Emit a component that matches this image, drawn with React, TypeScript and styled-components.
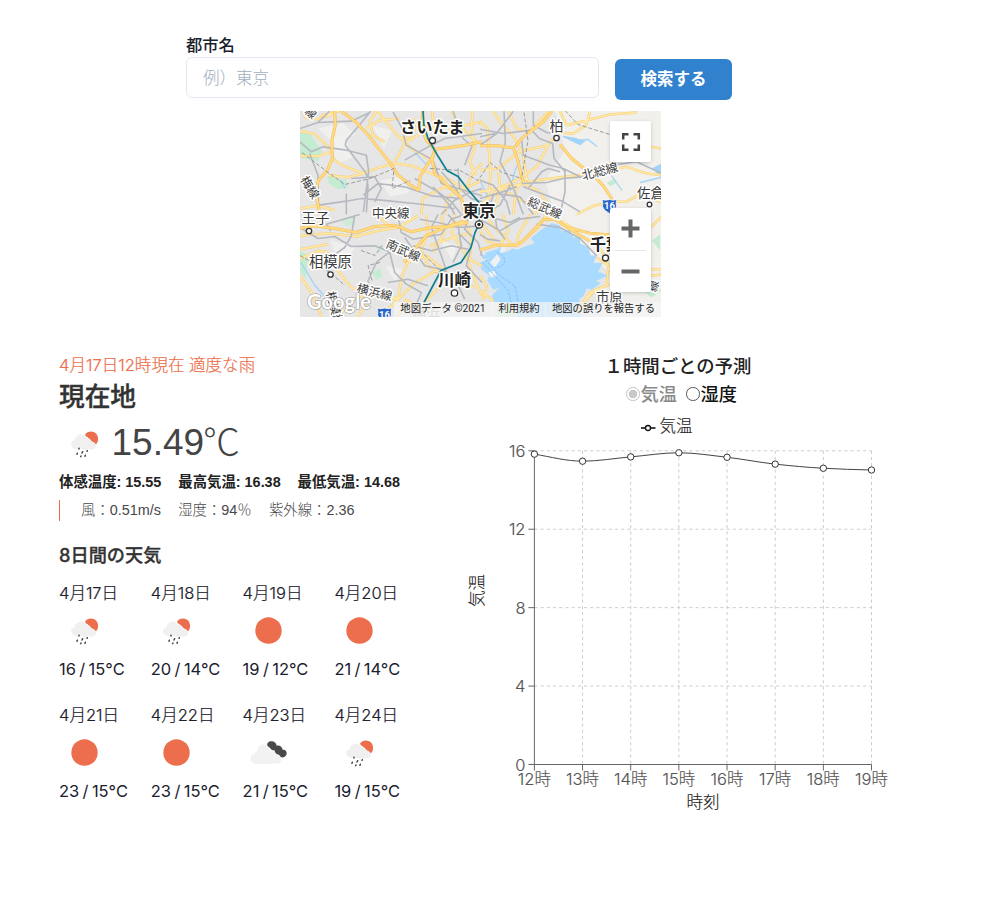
import React from "react";
import styled, { createGlobalStyle } from "styled-components";

const CJK = '"Noto Sans CJK JP"';

const GlobalStyle = createGlobalStyle`
  *, *::before, *::after { box-sizing: border-box; }
  body {
    margin: 0;
    background: #fff;
    color: #1a202c;
    font-family: Inter, ${CJK}, sans-serif;
    font-size: 16.5px;
  }
  h2, h3, p { margin: 0; }
`;

const Page = styled.main`
  width: 984px;
  height: 899px;
  padding-top: 32px;
  overflow: hidden;
`;

/* ---------- search ---------- */
const SearchForm = styled.form`
  display: flex;
  gap: 16px;
  margin-left: 186px;
  height: 68px;
`;
const Field = styled.div`
  display: flex;
  flex-direction: column;
  width: 413px;
`;
const Label = styled.label`
  height: 25px;
  line-height: 26px;
  font-size: 16.3px;
  font-weight: 500;
`;
const Input = styled.input`
  height: 41px;
  padding: 0 16px;
  border: 1px solid #e2e8f0;
  border-radius: 6px;
  outline: none;
  font: inherit;
  &::placeholder { color: #a0aec0; font-weight: 300; opacity: 1; }
`;
const SearchButton = styled.button`
  width: 117px;
  height: 41px;
  margin-top: 27px;
  padding: 0 0 4px;
  border: 0;
  border-radius: 6px;
  background: #3182ce;
  color: #fff;
  font: inherit;
  font-weight: 700;
`;

/* ---------- map ---------- */
const MapFrame = styled.section`
  position: relative;
  width: 361px;
  height: 206px;
  margin: 10.5px 0 0 300px;
  overflow: hidden;
  background: #e8e8e8;
`;
const MapControl = styled.div<{ $top: number; $height: number }>`
  position: absolute;
  top: ${(p) => p.$top}px;
  right: 10px;
  width: 41px;
  height: ${(p) => p.$height}px;
  display: flex;
  flex-direction: column;
  align-items: center;
  justify-content: center;
  background: #fff;
  border-radius: 2px;
  box-shadow: 0 1px 4px -1px rgba(0, 0, 0, 0.3);
`;
const ZoomHalf = styled.div`
  flex: 1;
  display: grid;
  place-items: center;
`;
const ControlRule = styled.div`
  width: 31px;
  height: 1px;
  background: #e6e6e6;
`;
const Attribution = styled.div`
  position: absolute;
  right: 0;
  bottom: 0;
  display: flex;
  height: 14.5px;
  line-height: 14.5px;
  font-family: Roboto, ${CJK}, sans-serif;
  font-size: 10.3px;
  color: #222;
  white-space: nowrap;
`;
const AttributionItem = styled.span<{ $width: number }>`
  width: ${(p) => p.$width}px;
  text-align: center;
  background: rgba(245, 245, 245, 0.7);
  & + & { border-left: 1px solid rgba(255, 255, 255, 0.4); }
`;

const highways = [
  "M110 6 L112 50 L102 95 L103 150 L88 185 L62 215 L52 250 L66 318",
  "M125 4 L175 42 L215 85 L240 118 L278 165 L300 200 L335 228 L362 246",
  "M362 246 L366 205 L390 165 L408 140",
  "M375 8 L370 55 L385 95 L410 122 L402 150 L410 195 L450 232 L490 268 L500 318",
  "M410 122 L450 118 L500 110 L552 100",
];
const highwaysNE = [
  "M0 112 L55 112 L100 118 L112 150 L125 205 L130 222",
  "M215 8 L190 40 L130 85 L105 115",
  "M240 108 L275 150 L318 185 L345 205 L372 235 L395 270 L396 318",
];
const highwaysSW = [
  "M0 48 L50 40 L110 48 L175 60 L230 42 L290 38 L340 58 L400 45 L450 42 L510 30",
  "M318 150 L350 110 L385 70 L440 45 L500 25",
];
const highwaysSE = [
  "M0 112 L50 98 L110 98 L130 85 L190 22 L225 20 L262 45 L320 80 L352 100",
  "M262 45 L330 62 L400 68 L440 90",
];
const roadsNW = [
  "M6 68 L50 76 L80 105 L103 128", "M6 142 L60 143 L98 130", "M68 22 L130 6", "M14 8 L24 28 L60 32 L100 18",
  "M103 150 L135 172 L195 195 L240 178 L290 165 L340 172 L400 195 L455 215 L500 240",
  "M235 8 L215 40 L225 80 L260 100", "M238 8 L300 82 L340 120 L390 150", "M345 30 L368 75 L320 105 L288 165",
  "M300 85 L330 90 L350 62 L400 50", "M402 8 L408 60 L440 72 L480 55 L552 40", "M460 8 L482 48 L540 105",
  "M525 8 L520 52 L530 120 L515 160 L535 200", "M90 200 L150 206 L195 195",
  "M370 318 L375 268 L440 235 L480 250 L552 215", "M440 318 L450 265 L490 240", "M505 240 L525 190 L552 165",
  "M8 300 L60 292 L110 305", "M205 60 L245 35 L305 30",
];
const roadsNE = [
  "M0 40 L22 60 L32 200 L20 318", "M40 8 L62 42 L102 85 L130 140 L140 215", "M0 185 L55 180 L118 128 L200 112 L225 85",
  "M230 72 L280 75 L318 50 L330 10", "M240 8 L260 50 L310 38 L390 18 L470 12", "M400 80 L480 110 L545 120",
  "M55 190 L60 235 L40 318", "M65 235 L110 215 L170 175 L210 100", "M110 230 L170 215 L280 202 L360 190 L440 175 L500 195 L545 200",
  "M0 290 L60 240 L130 225 L180 250 L220 318", "M290 318 L340 292 L400 280 L440 280 L470 262 L545 280",
  "M0 250 L60 240 L150 290 L170 318", "M85 8 L110 60 L145 70 L205 10", "M100 318 L108 240 L145 210",
];
const roadsSW = [
  "M6 138 L60 115 L85 118 L115 170 L160 225 L200 245 L300 258", "M6 110 L90 95", "M6 190 L40 240 L70 312", "M120 312 L165 262 L215 242 L300 262 L345 215 L420 170",
  "M180 312 L210 262", "M260 300 L300 262 L310 200 L328 150 L385 130 L430 165", "M6 70 L90 62 L175 72 L240 55 L300 45 L360 10",
  "M385 8 L390 60 L370 110 L390 160 L440 190", "M430 8 L440 60 L405 120", "M470 6 L460 60 L500 120 L530 200 L552 250", "M500 6 L520 75 L515 140 L552 160",
  "M430 165 L470 200 L530 225", "M300 312 L325 262 L390 300", "M380 270 L430 218 L480 200", "M395 100 L450 80 L520 60", "M240 8 L275 45",
];
const roadsSE = [
  "M0 28 L45 85", "M0 55 L20 85 L55 98", "M15 6 L40 42 L98 96", "M68 6 L85 55 L60 98", "M108 98 L118 60 L140 25 L150 6",
  "M130 85 L175 45 L200 6", "M200 10 L250 30 L292 55", "M0 190 L20 220 L8 262", "M0 235 L40 265", "M350 135 L385 160 L380 220 L330 240 L290 300",
  "M290 295 L345 232 L390 215", "M510 170 L545 170", "M512 190 L545 186", "M512 45 L545 12", "M352 100 L375 130 L392 180",
];
const railsNW = [
  "M95 8 L60 42 L6 60", "M6 100 L40 130 L75 115 L140 124 L205 140 L212 190 L196 310", "M60 42 L160 38 L215 12", "M218 8 L180 55 L145 95 L142 110 L205 195 L210 235 L205 312",
  "M35 135 L60 200 L62 318", "M285 10 L310 55 L325 110 L405 155 L430 225 L552 262", "M320 155 L400 110 L440 90 L552 75", "M465 8 L495 90 L522 112 L500 170",
  "M350 210 L420 250 L460 280 L490 318", "M62 290 L145 278 L190 270 L250 275 L350 285 L470 300", "M145 255 L145 318", "M196 260 L240 225 L320 235 L400 262 L490 270",
  "M160 210 L230 205 L250 240 L230 280", "M430 190 L470 235 L500 290 L510 318", "M405 235 L455 290 L470 318", "M480 180 L485 240 L520 270 L552 280", "M430 318 L470 275 L520 250 L552 240",
];
const railsNE = [
  "M0 62 L70 75 L155 65 L178 90 L218 105 L222 150 L255 190 L255 250 L240 318", "M100 8 L50 75 L0 110", "M72 8 L76 100 L60 160 L95 225 L130 318", "M0 85 L45 75",
  "M160 8 L160 50 L200 72 L228 74", "M125 95 L130 140 L210 170 L250 180 L300 205", "M145 240 L185 190 L205 180 L240 190", "M125 225 L200 222 L250 210 L310 205 L400 170 L470 160 L545 195",
  "M130 235 L250 280 L300 310", "M20 318 L40 260 L110 235", "M0 318 L60 290 L90 230", "M0 215 L40 230 L80 280 L90 318", "M0 270 L50 255 L120 265 L160 318",
];
const railsSW = [
  "M6 45 L60 78 L110 72 L160 102 L230 100 L275 118 L290 180", "M98 55 L85 35 L185 6", "M170 8 L160 70 L140 105 L90 140 L95 190", "M275 118 L235 150 L210 205 L222 245",
  "M300 8 L310 60 L345 80 L430 65 L460 20 L500 6", "M320 75 L380 160 L430 170 L470 195 L500 260", "M420 6 L400 45 L430 130 L445 175", "M290 180 L325 215 L370 240 L345 300", "M270 210 L330 200 L390 220", "M480 60 L520 100 L505 160 L552 210",
  "M365 20 L420 30 L480 45 L552 40", "M450 6 L480 40 L490 100 L465 150", "M515 6 L500 50 L540 90 L552 130", "M345 100 L400 115 L460 100 L510 110",
];
const railsSE = ["M0 20 L60 55 L120 20 L180 12", "M0 5 L90 30 L120 15", "M170 35 L240 45 L300 78 L350 130", "M0 66 L22 80 L60 85", "M45 6 L50 45 L75 80"];

const Roads = ({ rails, roads, highways: main }: { rails: string[]; roads: string[]; highways: string[] }) => (
  <g fill="none" strokeLinejoin="round">
    <path d={roads.join(" ")} stroke="#f8cd70" strokeWidth="7.500" />
    <path d={roads.join(" ")} stroke="#ffe9ab" strokeWidth="4.500" />
    <path d={rails.join(" ")} stroke="#b6b9c0" strokeWidth="4.800" />
    <path d={main.join(" ")} stroke="#f5bb52" strokeWidth="9" />
    <path d={main.join(" ")} stroke="#ffdb82" strokeWidth="6" />
  </g>
);

const MapSvg = styled.svg`
  display: block;
  text {
    font-family: ${CJK}, sans-serif;
    fill: #3c3c3c;
    stroke: #fff;
    stroke-width: 3px;
    stroke-linejoin: round;
    paint-order: stroke;
  }
  .city { font-weight: 700; fill: #222; }
  .brand { font-family: Lato, sans-serif; font-weight: 700; fill: #fff; stroke: #999; stroke-width: 1.2px; }
  .shield { font-family: Roboto, sans-serif; font-weight: 700; fill: #fff; stroke: none; }
`;

const Shield = ({ x, y }: { x: number; y: number }) => (
  <g transform={`translate(${x} ${y})`}>
    <path d="M-7.5 -6 Q-4 -4.7 0 -6 Q4 -4.7 7.5 -6 Q6 -2 7 1 Q6 5 0 8 Q-6 5 -7 1 Q-6 -2 -7.5 -6Z" fill="#2a66c8" stroke="#fff" strokeWidth=".8" />
    <text className="shield" x="0" y="3.5" textAnchor="middle" fontSize="9.5">16</text>
  </g>
);

const TokyoMap = () => (
  <MapSvg width="361" height="206" viewBox="300 110.5 361 206">
    <rect x="300" y="110" width="361" height="207" fill="#e6e6e6" />
    <path d="M555 110 H661 V317 H600 L608 270 L560 232 L545 180 L565 150Z" fill="#f1f0ed" />
    <g fill="#f0f0ef">
      <path d="M318 128 l25 -6 12 12 -20 10z M372 125 l20 5 -8 18z M330 145 l16 -8 6 20 -14 6z M380 180 l22 -4 8 16 -20 4z M440 240 l18 5 -6 14z M330 240 l26 6 -14 20z M385 265 l18 4 -8 12z" />
    </g>
    <g fill="#c3ecd0">
      <path d="M300 130 l10 3 12 18 -4 10 -18 -4z M327 176 l8 -3 3 6 8 0 2 8 -10 2 -9 -6z M300 250 l8 5 -2 24 -6 -8z M372 272 l8 -4 2 8 -6 3z M637 283 h20 l4 8 -10 6z M607 182 l8 -4 2 4 -7 4z M652 240 l8 -6 v16z M497 306 h16 v10 h-16z" />
      <path d="M340 219 l14 -3 2 8 -10 2z M375 244 l9 3 -4 6z" opacity=".6" />
    </g>
    <g transform="translate(480 212) scale(.33333)">
      <path d="M18 120 L55 108 L70 92 L78 120 L98 108 L112 112 L140 100 L165 92 L152 78 L180 55 L195 45 L215 32 L240 38 L245 55 L270 52 L280 74 L302 75 L300 92 L325 105 L332 128 L350 130 L340 152 L368 150 L355 178 L385 190 L348 205 L362 212 L335 232 L320 228 L310 252 L298 258 L302 318 L112 318 L110 275 L42 268 L36 250 L58 225 L40 232 L22 205 L28 190 L4 170 L0 150 L20 142 L0 128 L14 128Z" fill="#a9daff" />
      <path d="M30 150 L52 125 L62 140 L45 165Z M64 95 L74 90 76 118 60 122Z M25 180 L42 175 50 190 32 195Z" fill="#eef1f1" />
      <path d="M0 125 L60 190 L105 220 L120 300 M8 150 L85 235 L105 318 M50 120 C85 130 80 165 45 165" fill="none" stroke="#82b4f0" strokeWidth="2.500" strokeDasharray="8 4" />
    </g>
    <g fill="none" stroke="#a2d3f8" strokeWidth="1.300">
      <path d="M510 190 L515 170 L520 160 M563 136 L575 140 L588 139 L597 146 M415 152 L428 166 M420 131 L430 142 M640 182 L661 177 M301 262 L315 285 L325 296 M610 173 L622 190 M480 180 L494 210 M340 179 L345 188" />
      <path d="M563 136 l12 2 9 3 -4 3z M653 168 l8 -4 v12z" fill="#a2d3f8" />
    </g>
    <g transform="translate(298 108) scale(.33333)"><Roads rails={railsNW} roads={roadsNW} highways={highways} /></g>
    <g transform="translate(480 108) scale(.33333)"><Roads rails={railsNE} roads={roadsNE} highways={highwaysNE} /></g>
    <g transform="translate(298 212) scale(.33333)"><Roads rails={railsSW} roads={roadsSW} highways={highwaysSW} /></g>
    <g transform="translate(480 212) scale(.33333)"><Roads rails={railsSE} roads={roadsSE} highways={highwaysSE} /></g>
    <path d="M302 152 L315 162 L328 172 L345 184 L370 178 L394 168 L392 188 L410 180 M430 168 L460 170 L478 180 L490 162 L502 172 L522 178 M524 112 L528 140 L522 175 M565 110 L578 124 L610 134 M361 250 L375 255 L382 245 M372 280 L368 265 L380 262 M300 255 L330 272 L345 285 M420 250 L440 270" fill="none" stroke="#939393" strokeWidth=".9" strokeDasharray="4 2" />
    <path d="M423 110.500 L424 125 L428 138 L437 154 L447 170 L458 176 L468 189 L479 202 L479 224 L475 232 L471 247 L461 262 L441 270 L424 302" fill="none" stroke="#16808f" strokeWidth="1.700" />
    <g fill="#fff" stroke="#333" strokeWidth="1.300">
      <circle cx="432.500" cy="140" r="3" /><circle cx="556.500" cy="137.500" r="2.700" /><circle cx="309" cy="230.500" r="2.700" />
      <circle cx="330.500" cy="274" r="2.700" /><circle cx="454.500" cy="292.500" r="3.200" /><circle cx="605.500" cy="257.500" r="3" /><circle cx="649.500" cy="204" r="2.300" />
      <circle cx="479" cy="224" r="3.700" />
    </g>
    <circle cx="479" cy="224" r="1.700" fill="#222" />
    <g>
      <text className="city" x="400" y="132" fontSize="16.300">さいたま</text>
      <text className="city" x="462.500" y="216" fontSize="16.500">東京</text>
      <text className="city" x="438" y="285" fontSize="16.500">川崎</text>
      <text className="city" x="590" y="249.500" fontSize="16">千葉</text>
      <text x="549.500" y="130.500" fontSize="14">柏</text>
      <text x="301.500" y="222.500" fontSize="14">王子</text>
      <text x="309" y="266.500" fontSize="14.300">相模原</text>
      <text x="637" y="197.500" fontSize="13.500">佐倉</text>
      <text x="596" y="301.500" fontSize="13.300">市原</text>
      <text x="372" y="217" fontSize="12.500">中央線</text>
      <text transform="translate(583 179.500) rotate(-14)" fontSize="12.300">北総線</text>
      <text transform="translate(526.500 204) rotate(24)" fontSize="12">総武線</text>
      <text transform="translate(385 246.500) rotate(24)" fontSize="12">南武線</text>
      <text transform="translate(356 291.500) rotate(14)" fontSize="12">横浜線</text>
      <text transform="translate(300 179) rotate(58)" fontSize="12">梅線</text>
      <text transform="translate(326 292) rotate(75)" fontSize="12">相模線</text>
      <text x="412" y="318" fontSize="14" opacity=".4">横浜</text>
      <text transform="translate(304 112) rotate(40)" fontSize="11">線</text>
      <text transform="translate(656 292) rotate(-75)" fontSize="11">線</text>
    </g>
    <Shield x={609.5} y={205} />
    <Shield x={384.5} y={313.5} />
    <text className="brand" x="307" y="308.500" fontSize="20" textLength="64">Google</text>
  </MapSvg>
);

/* ---------- weather panels ---------- */
const Panels = styled.div`
  display: flex;
  margin-top: 36.5px;
`;
const Current = styled.section`
  width: 368px;
  margin-left: 59px;
  white-space: nowrap;
`;
const Alert = styled.p`
  height: 25px;
  line-height: 25px;
  color: #eb6e4b;
  font-weight: 300;
  font-size: 16.5px;
  letter-spacing: 0.02px;
  -webkit-text-stroke: 0.2px #eb6e4b;
`;
const Place = styled.h2`
  height: 36px;
  line-height: 37px;
  color: #333;
  font-size: 25.7px;
  font-weight: 500;
  -webkit-text-stroke: 0.4px #333;
`;
const Now = styled.div`
  display: flex;
  align-items: center;
  height: 58px;
`;
const NowTemp = styled.span`
  display: flex;
  margin-left: 1.5px;
  line-height: 58px;
  color: #444;
  font-family: "Liberation Sans", sans-serif;
  font-size: 37px;
`;
const Celsius = styled.span`
  margin-left: -1px;
  line-height: 52px;
  font-family: ${CJK}, sans-serif;
  font-weight: 300;
`;
const Stats = styled.p<{ $quiet?: boolean }>`
  display: flex;
  gap: ${(p) => (p.$quiet ? 17.2 : 16.9)}px;
  height: ${(p) => (p.$quiet ? 21 : 20)}px;
  line-height: ${(p) => (p.$quiet ? 20 : 21)}px;
  margin-top: ${(p) => (p.$quiet ? 8 : 0)}px;
  padding-left: ${(p) => (p.$quiet ? 21 : 0)}px;
  border-left: ${(p) => (p.$quiet ? "1px solid #eb6e4b" : "0")};
  color: ${(p) => (p.$quiet ? "#48484a" : "#222")};
  font-family: "Liberation Sans", ${CJK}, sans-serif;
  font-size: 14.4px;
  font-weight: ${(p) => (p.$quiet ? 300 : 700)};
`;
const Heading = styled.h3`
  height: 25px;
  margin: 21px 0 13px;
  line-height: 26px;
  color: #333;
  font-size: 18.2px;
  font-weight: 500;
  -webkit-text-stroke: 0.3px #333;
`;
const Days = styled.div`
  display: grid;
  grid-template-columns: repeat(4, 91.8px);
  row-gap: 20.5px;
`;
const Day = styled.div`
  display: flex;
  flex-direction: column;
`;
const DayDate = styled.span`
  height: 25px;
  line-height: 26px;
  font-size: 16.5px;
  font-weight: 300;
  -webkit-text-stroke: 0.2px currentColor;
`;
const DayTemp = styled.span`
  height: 25px;
  line-height: 27px;
  font-size: 16.5px;
  font-weight: 400;
  word-spacing: -1.3px;
`;
const IconSvg = styled.svg`
  display: block;
  flex: none;
  width: 51px;
  height: 51px;
`;

type Kind = "rain" | "sun" | "cloud";
const WeatherIcon = ({ kind }: { kind: Kind }) => {
  if (kind === "sun")
    return (
      <IconSvg viewBox="0 0 153 153">
        <path d="M76 37 C88 37 97 42 105 49 C112 57 116 66 116 77 C116 88 112 97 105 105 C97 112 88 116 76 116 C65 116 56 112 48 105 C41 97 37 88 37 77 C37 66 41 57 48 49 C56 42 65 37 76 37Z" fill="#ec6e4c" />
      </IconSvg>
    );
  if (kind === "cloud")
    return (
      <IconSvg viewBox="579 111 153 153">
        <path d="M652 167 C650 157 659 152 667 154 C674 155 679 160 680 167 C689 164 696 170 698 179 C706 178 711 184 710 191 C708 200 701 203 694 202 C690 203 687 195 684 196 C678 194 676 188 673 181 C668 181 664 181 660 174Z" fill="#484848" />
        <path d="M616 221 C598 219 597 194 614 190 C617 186 620 184 622 181 C622 163 642 157 652 169 C655 172 657 177 658 183 C664 179 673 183 677 191 C690 192 697 204 694 213 C692 219 687 221 680 221Z" fill="#f2f2f2" />
      </IconSvg>
    );
  return (
    <IconSvg viewBox="27 209 153 153">
      <path d="M105 259 C113 246 132 246 141 259 C147 270 144 282 138 288 C132 286 127 283 124 277 C118 276 113 273 113 266 C110 266 107 264 105 259Z" fill="#ec6e4c" />
      <path d="M77 301 C60 300 59 278 74 276 C75 257 100 251 107 269 C114 266 122 271 124 279 C132 280 138 285 138 293 C137 302 127 306 116 303 C106 307 98 305 92 300 C88 303 82 302 77 301Z" fill="#f0f0f0" />
      <g stroke="#484848" strokeWidth="4.500" strokeLinecap="round">
        <path d="M87 300 v2 M98 310 l-2 4 M112 307 l-1 2 M82 315 l-1 3 M93 323 l-1 2 M106 321 l-1 3" />
      </g>
    </IconSvg>
  );
};

const days: { date: string; kind: Kind; temp: string }[] = [
  { date: "4月17日", kind: "rain", temp: "16 / 15°C" },
  { date: "4月18日", kind: "rain", temp: "20 / 14°C" },
  { date: "4月19日", kind: "sun", temp: "19 / 12°C" },
  { date: "4月20日", kind: "sun", temp: "21 / 14°C" },
  { date: "4月21日", kind: "sun", temp: "23 / 15°C" },
  { date: "4月22日", kind: "sun", temp: "23 / 15°C" },
  { date: "4月23日", kind: "cloud", temp: "21 / 15°C" },
  { date: "4月24日", kind: "rain", temp: "19 / 15°C" },
];

/* ---------- hourly chart ---------- */
const Hourly = styled.section`
  display: flex;
  flex-direction: column;
  align-items: center;
  width: 504px;
`;
const HourlyTitle = styled.h3`
  height: 26px;
  margin-left: -2px;
  line-height: 24px;
  color: #222;
  font-size: 18.4px;
  font-weight: 500;
  font-family: ${CJK}, sans-serif;
`;
const Options = styled.div`
  display: flex;
  gap: 9px;
  height: 30px;
  margin-left: 5px;
`;
const Option = styled.label<{ $active?: boolean }>`
  display: flex;
  align-items: center;
  gap: 1px;
  line-height: 30px;
  font-size: 18.2px;
  font-weight: 500;
  color: ${(p) => (p.$active ? "#8a8a8a" : "#111")};
`;
const RadioDot = styled.span<{ $active?: boolean }>`
  width: 13.5px;
  height: 13.5px;
  border: 1px solid ${(p) => (p.$active ? "#c2c2c2" : "#555")};
  border-radius: 50%;
  background: ${(p) => (p.$active ? "radial-gradient(circle, #c8c8c8 0 4px, #fff 4.6px)" : "#fff")};
`;
const ChartSvg = styled.svg`
  display: block;
  flex: none;
  align-self: flex-start;
  margin-left: 33px;
  text {
    font-family: Inter, ${CJK}, sans-serif;
    font-size: 16.5px;
    font-weight: 300;
    fill: #555;
    stroke: #555;
    stroke-width: 0.15px;
  }
  .title { fill: #222; stroke: #222; }
`;

const X0 = 534.4;
const X1 = 871.5;
const Y0 = 764.5;
const Y1 = 450.8;
const temps = [15.83, 15.47, 15.69, 15.9, 15.67, 15.32, 15.11, 15.02];
const pts = temps.map((t, i) => [X0 + ((X1 - X0) * i) / 7, Y0 - ((Y0 - Y1) * t) / 16]);
const curve = pts.reduce((d, [x, y], i) => {
  if (i === 0) return `M${x} ${y}`;
  const [px, py] = pts[i - 1];
  const slope = (k: number) => {
    if (k === 0 || k === pts.length - 1) return k === 0 ? 8 : 1;
    const a = pts[k][1] - pts[k - 1][1];
    const b = pts[k + 1][1] - pts[k][1];
    return a * b <= 0 ? 0 : (2 * a * b) / (a + b);
  };
  const h = (x - px) / 3;
  return `${d} C${px + h} ${py + slope(i - 1) / 3} ${x - h} ${y - slope(i) / 3} ${x} ${y}`;
}, "");

const HourlyChart = () => (
  <ChartSvg width="432" height="410" viewBox="460 409 432 410">
    <path d="M641 428 H655.500" stroke="#111" strokeWidth="1.600" />
    <circle cx="648" cy="428" r="2.500" fill="#fff" stroke="#111" strokeWidth="1.300" />
    <text className="title" x="659.500" y="432">気温</text>
    <g stroke="#ccc" strokeDasharray="3.100 3.100">
      {pts.slice(1).map(([x]) => <line key={x} x1={x} x2={x} y1={Y1} y2={Y0} />)}
      {[4, 8, 12, 16].map((v) => {
        const y = Y0 - ((Y0 - Y1) * v) / 16;
        return <line key={v} x1={X0} x2={X1} y1={y} y2={y} />;
      })}
    </g>
    <g stroke="#666">
      <line x1={X0} x2={X0} y1={Y1} y2={Y0 + 6} />
      <line x1={X0 - 6} x2={X1} y1={Y0} y2={Y0} />
      {pts.slice(1).map(([x]) => <line key={x} x1={x} x2={x} y1={Y0} y2={Y0 + 6} />)}
      {[4, 8, 12, 16].map((v) => {
        const y = Y0 - ((Y0 - Y1) * v) / 16;
        return <line key={v} x1={X0 - 6} x2={X0} y1={y} y2={y} />;
      })}
    </g>
    {[0, 4, 8, 12, 16].map((v) => (
      <text key={v} x="525.500" y={Y0 - ((Y0 - Y1) * v) / 16 + 6} textAnchor="end">{v}</text>
    ))}
    {pts.map(([x], i) => (
      <text key={x} x={x} y="784.800" textAnchor="middle">{`${12 + i}時`}</text>
    ))}
    <path d={curve} fill="none" stroke="#444" />
    {pts.map(([x, y]) => <circle key={x} cx={x} cy={y} r="3.200" fill="#fff" stroke="#333" />)}
    <text className="title" x="703" y="808" textAnchor="middle">時刻</text>
    <text className="title" transform="translate(483 607) rotate(-90)">気温</text>
  </ChartSvg>
);

export default function App() {
  return (
    <>
      <GlobalStyle />
      <Page>
        <SearchForm onSubmit={(e) => e.preventDefault()}>
          <Field>
            <Label htmlFor="city">都市名</Label>
            <Input id="city" placeholder="例）東京" />
          </Field>
          <SearchButton type="submit">検索する</SearchButton>
        </SearchForm>

        <MapFrame>
          <TokyoMap />
          <MapControl $top={10.5} $height={41}>
            <svg width="20" height="20" viewBox="0 0 20 20" fill="none" stroke="#444" strokeWidth="2.500">
              <path d="M2.200 7.500 V2.200 H7.500 M12.500 2.200 H17.800 V7.500 M17.800 12.500 V17.800 H12.500 M7.500 17.800 H2.200 V12.500" />
            </svg>
          </MapControl>
          <MapControl $top={97.5} $height={84}>
            <ZoomHalf>
              <svg width="19" height="19" viewBox="0 0 19 19"><path d="M0.500 9.500 H18.500 M9.500 0.500 V18.500" stroke="#666" strokeWidth="4" /></svg>
            </ZoomHalf>
            <ControlRule />
            <ZoomHalf>
              <svg width="19" height="19" viewBox="0 0 19 19"><path d="M0.500 9.500 H18.500" stroke="#666" strokeWidth="4" /></svg>
            </ZoomHalf>
          </MapControl>
          <Attribution>
            <AttributionItem $width={98}>地図データ ©2021</AttributionItem>
            <AttributionItem $width={53}>利用規約</AttributionItem>
            <AttributionItem $width={116}>地図の誤りを報告する</AttributionItem>
          </Attribution>
        </MapFrame>

        <Panels>
          <Current>
            <Alert>4月17日12時現在 適度な雨</Alert>
            <Place>現在地</Place>
            <Now>
              <WeatherIcon kind="rain" />
              <NowTemp>15.49<Celsius>℃</Celsius></NowTemp>
            </Now>
            <Stats>
              <span>体感温度: 15.55</span>
              <span>最高気温: 16.38</span>
              <span>最低気温: 14.68</span>
            </Stats>
            <Stats $quiet>
              <span>風：0.51m/s</span>
              <span>湿度：94％</span>
              <span>紫外線：2.36</span>
            </Stats>
            <Heading>8日間の天気</Heading>
            <Days>
              {days.map((d) => (
                <Day key={d.date}>
                  <DayDate>{d.date}</DayDate>
                  <WeatherIcon kind={d.kind} />
                  <DayTemp>{d.temp}</DayTemp>
                </Day>
              ))}
            </Days>
          </Current>

          <Hourly>
            <HourlyTitle>１時間ごとの予測</HourlyTitle>
            <Options>
              <Option $active><RadioDot $active />気温</Option>
              <Option><RadioDot />湿度</Option>
            </Options>
            <HourlyChart />
          </Hourly>
        </Panels>
      </Page>
    </>
  );
}
